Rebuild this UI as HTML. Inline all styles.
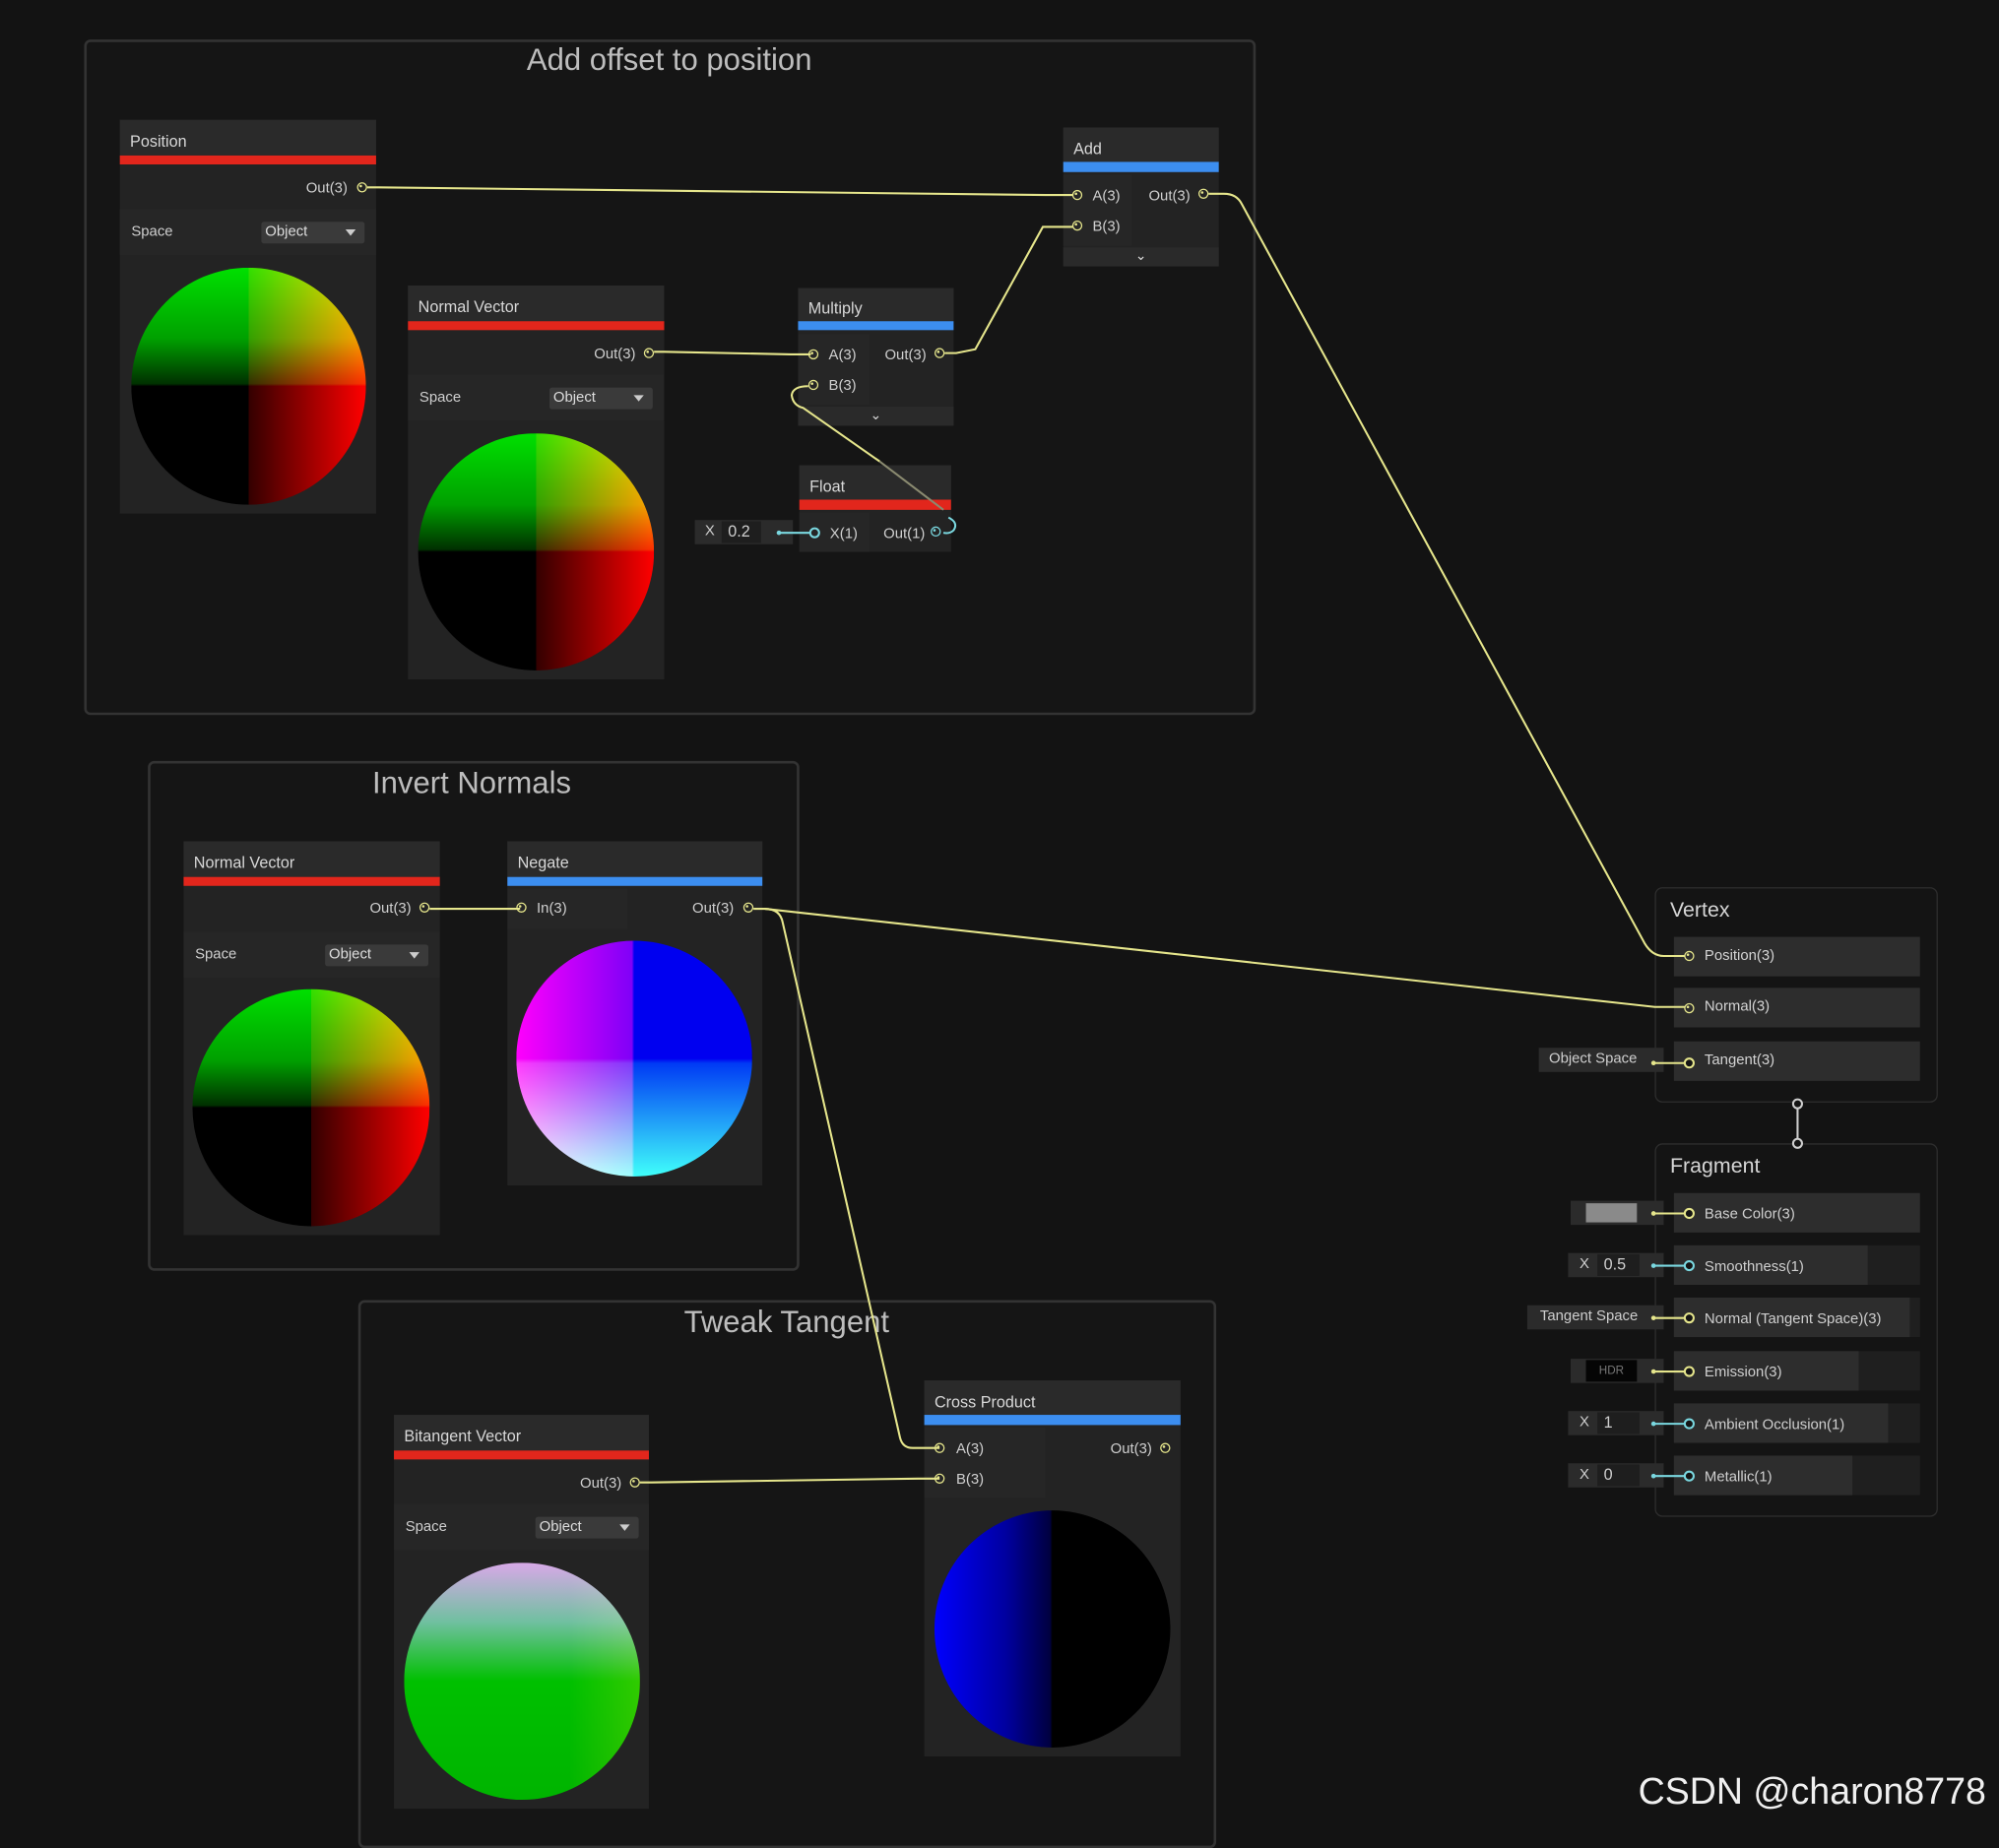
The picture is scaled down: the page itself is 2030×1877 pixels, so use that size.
<!DOCTYPE html>
<html><head><meta charset="utf-8"><style>
html,body{margin:0;padding:0;background:#131313;overflow:hidden}
#w{position:absolute;left:0;top:0;width:1568px;height:1435px;transform:scale(1.29464);transform-origin:0 0;font-family:"Liberation Sans",sans-serif;color:#cfcfcf}
.a{position:absolute;box-sizing:border-box}
.grp{border:2px solid #333;border-radius:5px;background:#151515}
.gt{position:absolute;font-size:24px;color:#bdbdbd;white-space:nowrap;transform:translateX(-50%)}
.hd{background:#2a2a2a;font-size:12.5px;color:#d8d8d8;padding-left:8px}
.bd{background:#232323}
.row{background:#262626}
.t{position:absolute;font-size:11.5px;color:#cfcfcf;white-space:nowrap}
.dd{background:#3a3a3a;border-radius:2px;font-size:11.5px;color:#ddd;padding-left:3px}
.dd:after{content:"";position:absolute;right:7px;top:6px;border:4px solid transparent;border-top:5px solid #ccc}
.p{position:absolute;width:8px;height:8px;border-radius:50%;border:1.6px solid #e6e68c;box-sizing:border-box}
.p:after{content:"";position:absolute;left:1.3px;top:1.3px;width:2.2px;height:2.2px;border-radius:50%;background:#e6e68c}
.pc{border-color:#7ad8e0}.pc:after{background:#7ad8e0}
.sph{position:absolute;border-radius:50%;background-blend-mode:screen}
.s1{background:linear-gradient(90deg,#000 50%,#300 50%,#f00 100%),linear-gradient(180deg,#00e000 0%,#00a000 30%,#003000 49%,#000 50%)}
.s2{background:linear-gradient(90deg,#f0c 0%,#800080 49%,#000 50%),linear-gradient(180deg,#000 50%,#003a50 52%,#40ffb0 100%),linear-gradient(#0000f0,#0000f0)}
.s3{background:linear-gradient(180deg,#d8a8e8 0%,#70c0a0 25%,#00c000 50%,#00b400 100%),linear-gradient(90deg,#000 50%,#000 70%,#303000 100%)}
.s4{background:linear-gradient(90deg,#0000ff 0%,#0000a0 30%,#000040 49%,#000 50%)}
.vr{background:#2d2d2d;font-size:11.5px;color:#d4d4d4;padding-left:24px;line-height:31px}
.fld{background:#2b2b2b;font-size:11.5px;color:#cfcfcf}
</style></head><body><div id="w">

<!-- groups -->
<div class="a grp" style="left:66px;top:31px;width:919px;height:530px"></div>
<div class="gt" style="left:525px;top:34px">Add offset to position</div>
<div class="a grp" style="left:116px;top:597px;width:511px;height:400px"></div>
<div class="gt" style="left:370px;top:601px">Invert Normals</div>
<div class="a grp" style="left:281px;top:1020px;width:673px;height:430px"></div>
<div class="gt" style="left:617px;top:1024px">Tweak Tangent</div>

<!-- Position -->
<div class="a bd" style="left:94px;top:94px;width:201px;height:309px"></div>
<div class="a hd" style="left:94px;top:94px;width:201px;height:28px;line-height:34px">Position</div>
<div class="a" style="left:94px;top:122px;width:201px;height:7px;background:#e2261c"></div>
<div class="a row" style="left:94px;top:164px;width:201px;height:36px"></div>
<div class="t" style="left:240px;top:142px">Out(3)</div><div class="p" style="left:280px;top:143px"></div>
<div class="t" style="left:103px;top:176px">Space</div>
<div class="a dd" style="left:205px;top:174px;width:81px;height:17px;line-height:17px">Object</div>
<div class="sph s1" style="left:103px;top:210px;width:184px;height:186px"></div>

<!-- Normal Vector 1 -->
<div class="a bd" style="left:320px;top:224px;width:201px;height:309px"></div>
<div class="a hd" style="left:320px;top:224px;width:201px;height:28px;line-height:34px">Normal Vector</div>
<div class="a" style="left:320px;top:252px;width:201px;height:7px;background:#e2261c"></div>
<div class="a row" style="left:320px;top:294px;width:201px;height:36px"></div>
<div class="t" style="left:466px;top:272px">Out(3)</div><div class="p" style="left:505px;top:273px"></div>
<div class="t" style="left:329px;top:306px">Space</div>
<div class="a dd" style="left:431px;top:304px;width:81px;height:17px;line-height:17px">Object</div>
<div class="sph s1" style="left:328px;top:340px;width:185px;height:186px"></div>

<!-- Multiply -->
<div class="a bd" style="left:626px;top:226px;width:122px;height:108px"></div>
<div class="a hd" style="left:626px;top:226px;width:122px;height:26px;line-height:32px">Multiply</div>
<div class="a" style="left:626px;top:252px;width:122px;height:7px;background:#3c8ef0"></div>
<div class="a row" style="left:626px;top:262px;width:56px;height:56px"></div>
<div class="a" style="left:626px;top:319px;width:122px;height:15px;background:#2a2a2a;text-align:center;font-size:11px;line-height:14px;color:#ddd">⌄</div>
<div class="p" style="left:634px;top:274px"></div><div class="t" style="left:650px;top:273px">A(3)</div>
<div class="p" style="left:634px;top:298px"></div><div class="t" style="left:650px;top:297px">B(3)</div>
<div class="t" style="left:694px;top:273px">Out(3)</div><div class="p" style="left:733px;top:273px"></div>

<!-- Float -->
<div class="a bd" style="left:627px;top:365px;width:119px;height:68px"></div>
<div class="a hd" style="left:627px;top:365px;width:119px;height:27px;line-height:34px">Float</div>
<div class="a" style="left:627px;top:392px;width:119px;height:8px;background:#e2261c"></div>
<div class="a row" style="left:627px;top:402px;width:55px;height:31px"></div>
<div class="t" style="left:651px;top:413px">X(1)</div>
<div class="t" style="left:693px;top:413px">Out(1)</div><div class="p pc" style="left:730px;top:413px"></div>
<div class="a fld" style="left:545px;top:408px;width:77px;height:19px"></div>
<div class="a" style="left:566px;top:409px;width:31px;height:17px;background:#1e1e1e"></div>
<div class="t" style="left:553px;top:411px">X</div><div class="t" style="left:571px;top:410px;font-size:12.5px">0.2</div>

<!-- Add -->
<div class="a bd" style="left:834px;top:100px;width:122px;height:109px"></div>
<div class="a hd" style="left:834px;top:100px;width:122px;height:27px;line-height:34px">Add</div>
<div class="a" style="left:834px;top:127px;width:122px;height:8px;background:#3c8ef0"></div>
<div class="a row" style="left:834px;top:137px;width:54px;height:56px"></div>
<div class="a" style="left:834px;top:194px;width:122px;height:15px;background:#2a2a2a;text-align:center;font-size:11px;line-height:14px;color:#ddd">⌄</div>
<div class="p" style="left:841px;top:149px"></div><div class="t" style="left:857px;top:148px">A(3)</div>
<div class="p" style="left:841px;top:173px"></div><div class="t" style="left:857px;top:172px">B(3)</div>
<div class="t" style="left:901px;top:148px">Out(3)</div><div class="p" style="left:940px;top:148px"></div>

<!-- Normal Vector 2 -->
<div class="a bd" style="left:144px;top:660px;width:201px;height:309px"></div>
<div class="a hd" style="left:144px;top:660px;width:201px;height:28px;line-height:34px">Normal Vector</div>
<div class="a" style="left:144px;top:688px;width:201px;height:7px;background:#e2261c"></div>
<div class="a row" style="left:144px;top:731px;width:201px;height:36px"></div>
<div class="t" style="left:290px;top:707px">Out(3)</div><div class="p" style="left:329px;top:708px"></div>
<div class="t" style="left:153px;top:743px">Space</div>
<div class="a dd" style="left:255px;top:741px;width:81px;height:17px;line-height:17px">Object</div>
<div class="sph s1" style="left:151px;top:776px;width:186px;height:186px"></div>

<!-- Negate -->
<div class="a bd" style="left:398px;top:660px;width:200px;height:270px"></div>
<div class="a hd" style="left:398px;top:660px;width:200px;height:28px;line-height:34px">Negate</div>
<div class="a" style="left:398px;top:688px;width:200px;height:7px;background:#3c8ef0"></div>
<div class="a row" style="left:398px;top:697px;width:94px;height:32px"></div>
<div class="p" style="left:405px;top:708px"></div><div class="t" style="left:421px;top:707px">In(3)</div>
<div class="t" style="left:543px;top:707px">Out(3)</div><div class="p" style="left:583px;top:708px"></div>
<div class="sph s2" style="left:405px;top:738px;width:185px;height:185px"></div>

<!-- Bitangent -->
<div class="a bd" style="left:309px;top:1110px;width:200px;height:309px"></div>
<div class="a hd" style="left:309px;top:1110px;width:200px;height:28px;line-height:34px">Bitangent Vector</div>
<div class="a" style="left:309px;top:1138px;width:200px;height:7px;background:#e2261c"></div>
<div class="a row" style="left:309px;top:1180px;width:200px;height:36px"></div>
<div class="t" style="left:455px;top:1158px">Out(3)</div><div class="p" style="left:494px;top:1159px"></div>
<div class="t" style="left:318px;top:1192px">Space</div>
<div class="a dd" style="left:420px;top:1190px;width:81px;height:17px;line-height:17px">Object</div>
<div class="sph s3" style="left:317px;top:1226px;width:185px;height:186px"></div>

<!-- Cross Product -->
<div class="a bd" style="left:725px;top:1083px;width:201px;height:295px"></div>
<div class="a hd" style="left:725px;top:1083px;width:201px;height:27px;line-height:34px">Cross Product</div>
<div class="a" style="left:725px;top:1110px;width:201px;height:8px;background:#3c8ef0"></div>
<div class="a row" style="left:725px;top:1120px;width:95px;height:55px"></div>
<div class="p" style="left:733px;top:1132px"></div><div class="t" style="left:750px;top:1131px">A(3)</div>
<div class="p" style="left:733px;top:1156px"></div><div class="t" style="left:750px;top:1155px">B(3)</div>
<div class="t" style="left:871px;top:1131px">Out(3)</div><div class="p" style="left:910px;top:1132px;border-color:#e6e68c"></div>
<div class="sph s4" style="left:733px;top:1185px;width:185px;height:186px"></div>

<!-- Vertex -->
<div class="a" style="left:1298px;top:696px;width:222px;height:169px;border:1.5px solid #2e2e2e;border-radius:6px;background:#141414"></div>
<div class="t" style="left:1310px;top:705px;font-size:16.5px;color:#d6d6d6">Vertex</div>
<div class="a vr" style="left:1313px;top:735px;width:193px;height:31px">Position(3)</div>
<div class="a vr" style="left:1313px;top:775px;width:193px;height:31px">Normal(3)</div>
<div class="a vr" style="left:1313px;top:817px;width:193px;height:31px">Tangent(3)</div>
<div class="p" style="left:1321px;top:746px"></div><div class="p" style="left:1321px;top:787px"></div>
<div class="a fld" style="left:1207px;top:822px;width:98px;height:19px;padding-left:8px;line-height:19px">Object Space</div>

<!-- Fragment -->
<div class="a" style="left:1298px;top:897px;width:222px;height:293px;border:1.5px solid #2e2e2e;border-radius:6px;background:#141414"></div>
<div class="t" style="left:1310px;top:906px;font-size:16.5px;color:#d6d6d6">Fragment</div>
<div class="a" style="left:1313px;top:936px;width:193px;height:31px;background:#2d2d2d"></div>
<div class="a" style="left:1313px;top:977px;width:193px;height:31px;background:#1f1f1f"></div><div class="a" style="left:1313px;top:977px;width:152px;height:31px;background:#2d2d2d"></div>
<div class="a" style="left:1313px;top:1018px;width:193px;height:31px;background:#1f1f1f"></div><div class="a" style="left:1313px;top:1018px;width:185px;height:31px;background:#2d2d2d"></div>
<div class="a" style="left:1313px;top:1060px;width:193px;height:31px;background:#1f1f1f"></div><div class="a" style="left:1313px;top:1060px;width:145px;height:31px;background:#2d2d2d"></div>
<div class="a" style="left:1313px;top:1101px;width:193px;height:31px;background:#1f1f1f"></div><div class="a" style="left:1313px;top:1101px;width:168px;height:31px;background:#2d2d2d"></div>
<div class="a" style="left:1313px;top:1142px;width:193px;height:31px;background:#1f1f1f"></div><div class="a" style="left:1313px;top:1142px;width:140px;height:31px;background:#2d2d2d"></div>
<div class="t" style="left:1337px;top:947px">Base Color(3)</div>
<div class="t" style="left:1337px;top:988px">Smoothness(1)</div>
<div class="t" style="left:1337px;top:1029px">Normal (Tangent Space)(3)</div>
<div class="t" style="left:1337px;top:1071px">Emission(3)</div>
<div class="t" style="left:1337px;top:1112px">Ambient Occlusion(1)</div>
<div class="t" style="left:1337px;top:1153px">Metallic(1)</div>
<div class="t" style="left:1337px;top:746px;font-size:11.5px"></div>
<!-- fields -->
<div class="a fld" style="left:1232px;top:942px;width:73px;height:19px"></div>
<div class="a" style="left:1244px;top:944px;width:40px;height:15px;background:#8a8a8a"></div>
<div class="a fld" style="left:1230px;top:983px;width:75px;height:19px"></div>
<div class="a" style="left:1253px;top:984px;width:33px;height:17px;background:#1e1e1e"></div>
<div class="t" style="left:1239px;top:986px">X</div><div class="t" style="left:1258px;top:985px;font-size:12.5px">0.5</div>
<div class="a fld" style="left:1198px;top:1024px;width:107px;height:19px;padding-left:10px;line-height:19px">Tangent Space</div>
<div class="a fld" style="left:1232px;top:1066px;width:73px;height:19px"></div>
<div class="a" style="left:1244px;top:1067px;width:40px;height:17px;background:#050505;font-size:9px;color:#777;text-align:center;line-height:17px">HDR</div>
<div class="a fld" style="left:1230px;top:1107px;width:75px;height:19px"></div>
<div class="a" style="left:1253px;top:1108px;width:33px;height:17px;background:#1e1e1e"></div>
<div class="t" style="left:1239px;top:1110px">X</div><div class="t" style="left:1258px;top:1109px;font-size:12.5px">1</div>
<div class="a fld" style="left:1230px;top:1148px;width:75px;height:19px"></div>
<div class="a" style="left:1253px;top:1149px;width:33px;height:17px;background:#1e1e1e"></div>
<div class="t" style="left:1239px;top:1151px">X</div><div class="t" style="left:1258px;top:1150px;font-size:12.5px">0</div>

<!-- wires -->
<svg class="a" style="left:0;top:0" width="1568" height="1435" viewBox="0 0 1568 1435">
<g fill="none" stroke="#e6e68c" stroke-width="1.6">
<path d="M288,147 L297,147 L820,153 L834,153 L842,153"/>
<path d="M513,276 L521,276 L620,278 L636,278"/>
<path d="M741,277 L750,277 L765,274 L818,178 L834,178 L842,178"/>
<path d="M948,152 L960,152 Q970,152 974,160 L1290,740 Q1296,750 1305,750 L1322,750"/>
<path d="M337,713 L345,713 L398,713 L408,713"/>
<path d="M591,713 L600,713 L1298,790 L1322,790"/>
<path d="M600,713 Q612,713 614,724 L706,1128 Q708,1136 716,1136 L737,1136"/>
<path d="M502,1163 L511,1163 L720,1160 L737,1160"/>
<path d="M634,303 Q622,303 621,310 Q622,318 630,320 L690,362" stroke="#e6e68c"/>
<path d="M690,362 L740,400" stroke="#8a8a70"/>
<path d="M1297,834 L1327,834 M1297,952 L1327,952 M1297,1034 L1327,1034 M1297,1076 L1327,1076"/>
</g>
<g fill="none" stroke="#7ad8e0" stroke-width="1.6">
<path d="M612,418 L636,418"/><circle cx="639" cy="418" r="3.5"/>
<path d="M1297,993 L1327,993 M1297,1117 L1327,1117 M1297,1158 L1327,1158"/>
<circle cx="1325" cy="993" r="3.5" fill="#141414"/><circle cx="1325" cy="1117" r="3.5" fill="#141414"/><circle cx="1325" cy="1158" r="3.5" fill="#141414"/>
<path d="M744,406 Q752,410 748,416 Q745,419 740,418"/>
</g>
<g fill="#141414" stroke="#e6e68c" stroke-width="1.6">
<circle cx="1325" cy="834" r="3.5"/><circle cx="1325" cy="952" r="3.5"/><circle cx="1325" cy="1034" r="3.5"/><circle cx="1325" cy="1076" r="3.5"/>
</g>
<g fill="#e6e68c"><circle cx="1297" cy="834" r="1.8"/><circle cx="1297" cy="952" r="1.8"/><circle cx="1297" cy="1034" r="1.8"/><circle cx="1297" cy="1076" r="1.8"/></g>
<g fill="#7ad8e0"><circle cx="611" cy="418" r="1.8"/><circle cx="1297" cy="993" r="1.8"/><circle cx="1297" cy="1117" r="1.8"/><circle cx="1297" cy="1158" r="1.8"/></g>
<g stroke="#cfcfcf" stroke-width="1.6" fill="#141414"><path d="M1410,870 L1410,893"/><circle cx="1410" cy="866" r="3.5"/><circle cx="1410" cy="897" r="3.5"/></g>
</svg>

<div class="t" style="left:1285px;top:1390px;font-size:29px;color:#f0f0f0">CSDN @charon8778</div>
</div></body></html>
